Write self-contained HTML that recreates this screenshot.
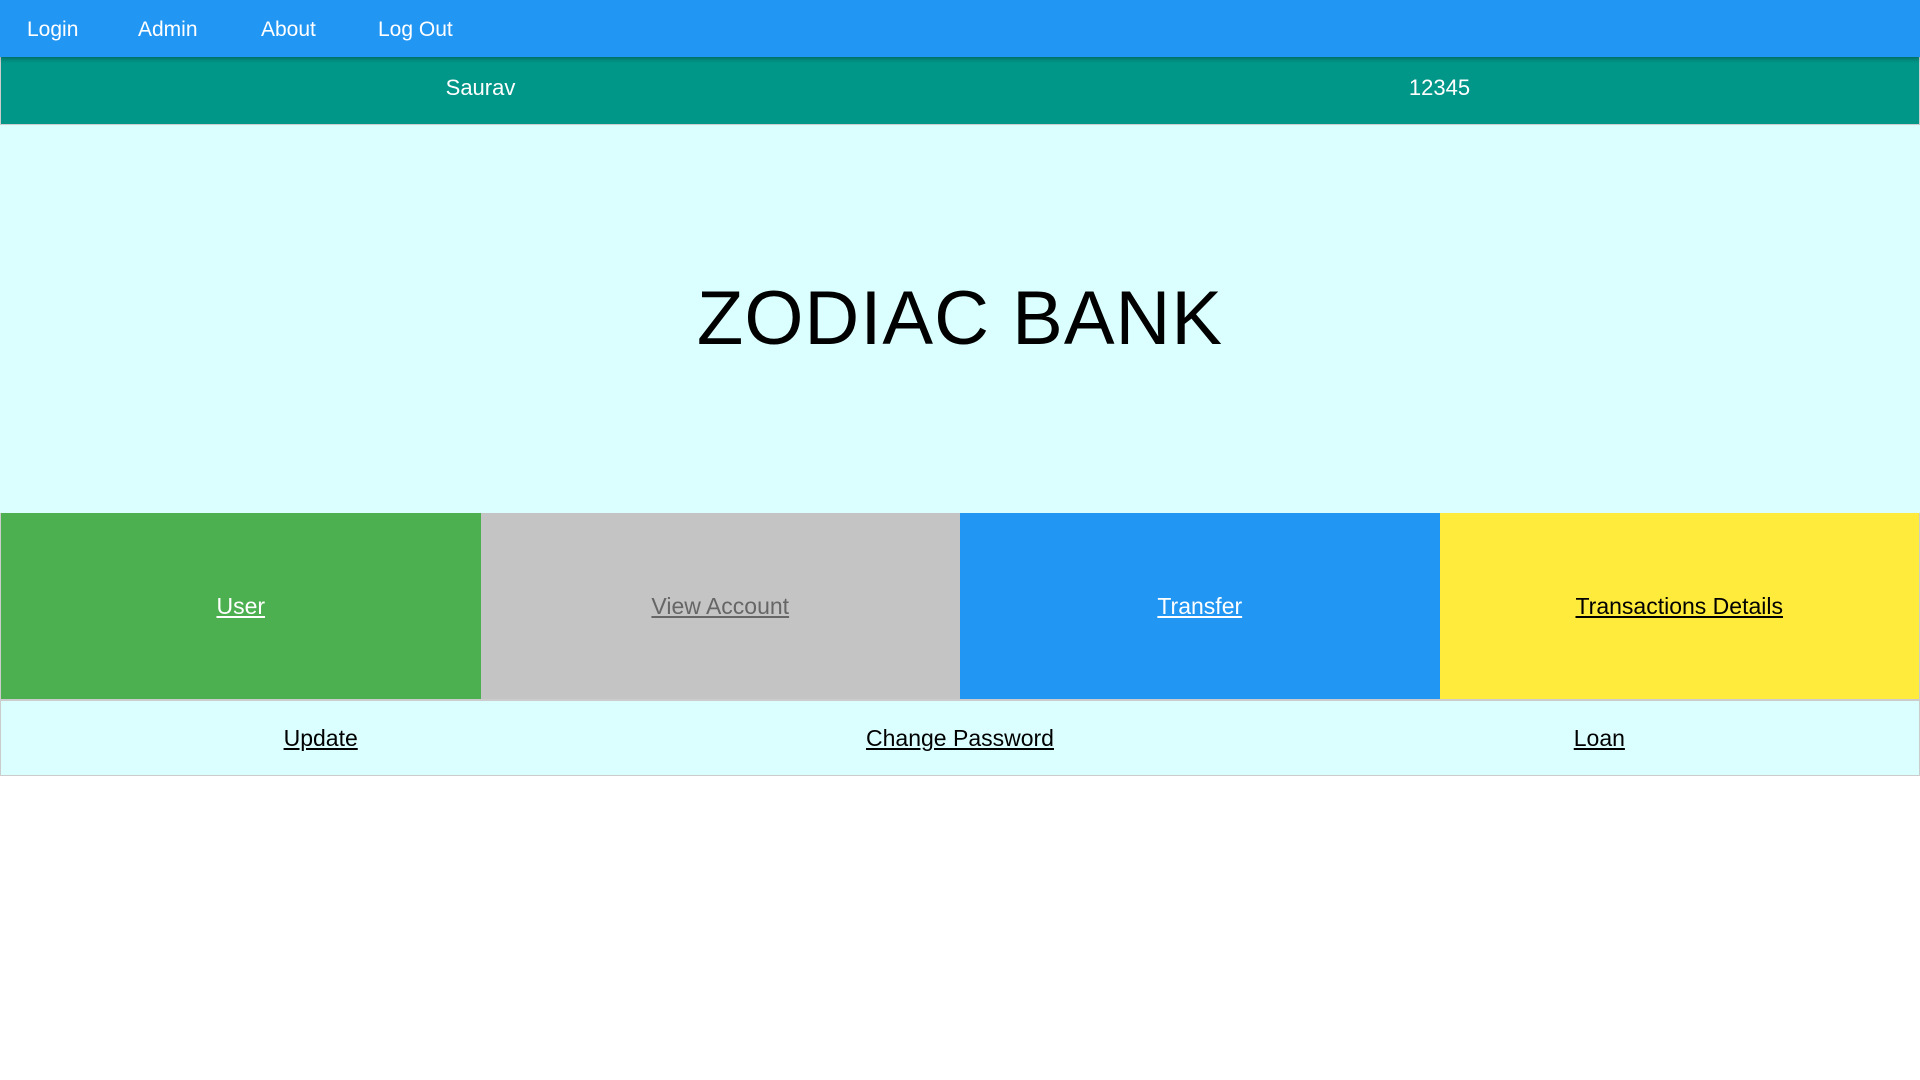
<!DOCTYPE html>
<html><head><style>
body{margin:0;width:1920px;height:1080px;background:#fff;font-family:"Liberation Sans",sans-serif;overflow:hidden}
.nav{height:57px;background:#2196f3;box-shadow:0 2px 4px rgba(0,0,0,.3);position:relative;z-index:2}
.nav a{position:absolute;top:18px;color:#fff;font-size:21px;text-decoration:none}
.bar{display:flex;height:68px;background:#009688;border:1px solid #ccc;border-top:none;box-sizing:border-box}
.bar div{flex:1;text-align:center;color:#fff;font-size:22px;line-height:62px}
.hero{height:388px;background:#dbffff;text-align:center;line-height:388px;font-size:76px;color:#000;letter-spacing:1px}
.tiles{display:flex;height:187px;border:1px solid #ccc;border-top:none;box-sizing:border-box}
.tiles div{flex:1;text-align:center;line-height:187px;font-size:23px}
.tiles a{text-decoration:underline}
.row{display:flex;height:76px;background:#dbffff;border:1px solid #ccc;box-sizing:border-box}
.row div{flex:1;text-align:center;line-height:74px;font-size:23px}
.row a{color:#000;text-decoration:underline}
</style></head><body>
<div class="nav"><a style="left:27px">Login</a><a style="left:138px">Admin</a><a style="left:261px">About</a><a style="left:378px">Log Out</a></div>
<div class="bar"><div>Saurav</div><div>12345</div></div>
<div class="hero">ZODIAC BANK</div>
<div class="tiles">
<div style="background:#4caf50"><a style="color:#fff">User</a></div>
<div style="background:#c4c4c4"><a style="color:#666">View Account</a></div>
<div style="background:#2196f3"><a style="color:#fff">Transfer</a></div>
<div style="background:#ffeb3b"><a style="color:#000">Transactions Details</a></div>
</div>
<div class="row"><div><a>Update</a></div><div><a>Change Password</a></div><div><a>Loan</a></div></div>
</body></html>
